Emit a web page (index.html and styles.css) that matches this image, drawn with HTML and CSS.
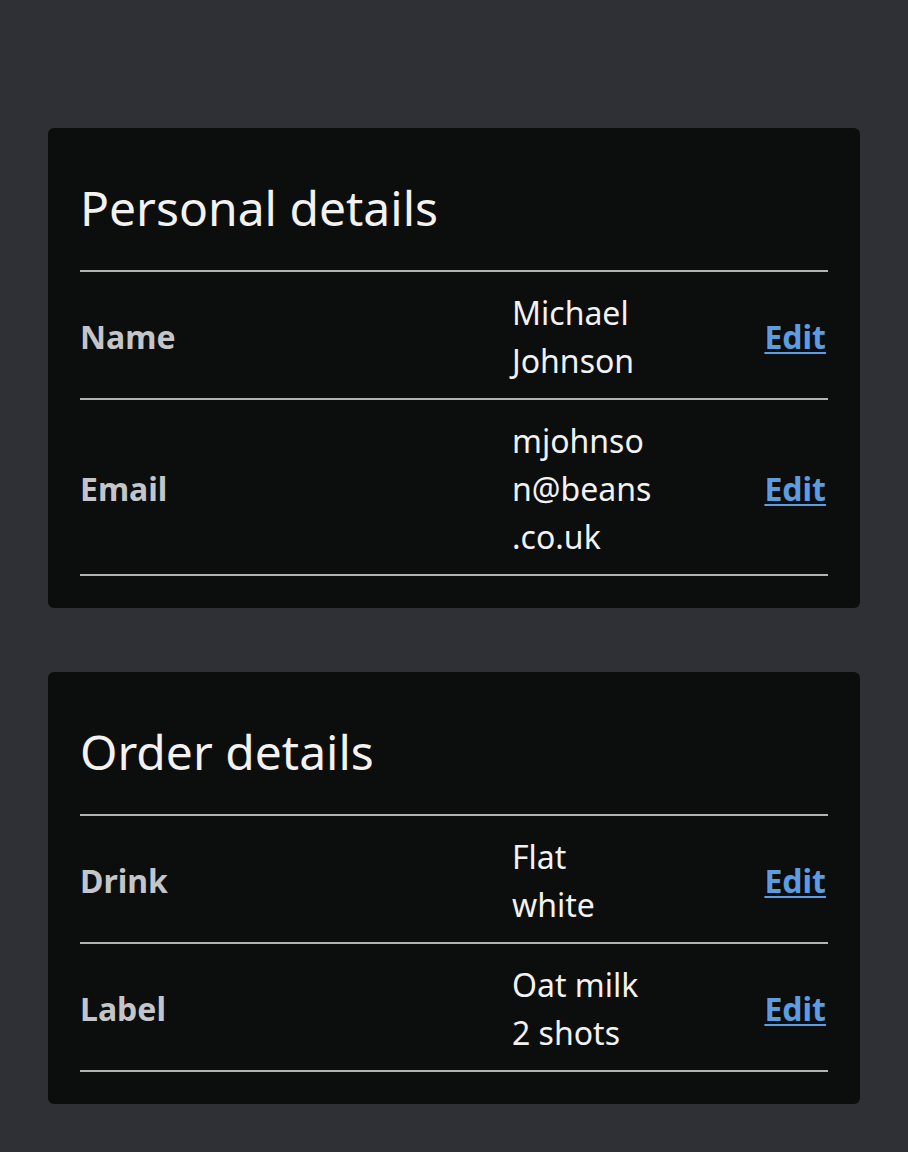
FILE: index.html
```html
<!DOCTYPE html>
<html lang="en">
<head>
    <meta charset="UTF-8">
    <meta name="viewport" content="width=device-width, initial-scale=1.0">
    <title>Check your answers</title>
    <link rel="stylesheet" href="styles.css">
</head>
<body>
    <div class="page">
        <div class="card">
            <h2>Personal details</h2>
            <dl class="summary">
                <div class="row">
                    <dt>Name</dt>
                    <dd class="value">Michael Johnson</dd>
                    <dd class="actions"><a href="#">Edit</a></dd>
                </div>
                <div class="row">
                    <dt>Email</dt>
                    <dd class="value">mjohnson@beans.co.uk</dd>
                    <dd class="actions"><a href="#">Edit</a></dd>
                </div>
            </dl>
        </div>

        <div class="card">
            <h2>Order details</h2>
            <dl class="summary">
                <div class="row">
                    <dt>Drink</dt>
                    <dd class="value">Flat white</dd>
                    <dd class="actions"><a href="#">Edit</a></dd>
                </div>
                <div class="row">
                    <dt>Label</dt>
                    <dd class="value">Oat milk<br>2 shots</dd>
                    <dd class="actions"><a href="#">Edit</a></dd>
                </div>
            </dl>
        </div>
    </div>
</body>
</html>
```

FILE: styles.css
```css
body {
    margin: 0;
    background: #2e3036;
    font-family: "Noto Sans", "Open Sans", Arial, sans-serif;
    color: #f3f2f1;
}
.page {
    padding: 128px 48px 48px;
    display: flex;
    flex-direction: column;
    gap: 64px;
}
.card {
    background: #0c0d0d;
    border-radius: 6px;
    padding: 32px;
}
h2 {
    margin: 0;
    padding: 18px 0 32px;
    font-size: 48px;
    font-weight: 400;
    line-height: 60px;
    color: #f3f2f1;
}
.summary {
    margin: 0;
    border-top: 2px solid #b1b4b6;
}
.row {
    display: grid;
    grid-template-columns: 432px 140px 1fr;
    align-items: center;
    padding: 17px 0 13px;
    border-bottom: 2px solid #b1b4b6;
    font-size: 32px;
    line-height: 48px;
}
.row dt {
    font-weight: 700;
    color: #c3c5c9;
}
.row dd {
    margin: 0;
}
.value {
    overflow-wrap: anywhere;
    color: #f3f2f1;
}
.actions {
    text-align: right;
    padding-right: 2px;
}
.actions a {
    color: #5b9de0;
    font-weight: 700;
    text-decoration: underline;
    text-decoration-thickness: 2px;
    text-underline-offset: 3px;
}
```
